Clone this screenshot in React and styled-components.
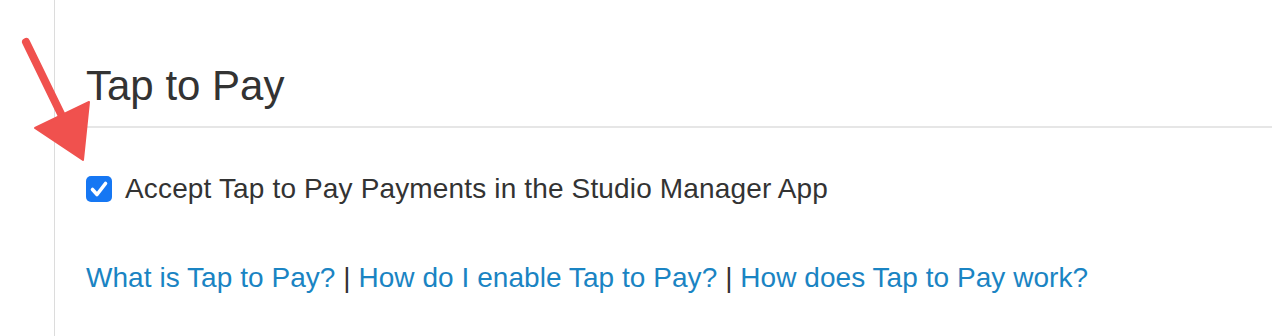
import React, { useState } from 'react';
import styled, { createGlobalStyle } from 'styled-components';

const GlobalStyle = createGlobalStyle`
    body {
        margin: 0;
        background: #fff;
        font-family: "Liberation Sans", Arial, sans-serif;
        color: #333;
    }
`

const Page = styled.div`
    position: relative;
    display: flex;
    height: 336px;
    overflow: hidden;
`

const Gutter = styled.div`
    width: 54px;
    flex-shrink: 0;
`

const Panel = styled.section`
    flex: 1;
    border-left: 1px solid #dcdcdc;
    padding: 62px 0 0 31px;
`

const Heading = styled.h2`
    margin: 0;
    padding-bottom: 16px;
    font-size: 42px;
    font-weight: 400;
    line-height: 48px;
    color: #333;
    border-bottom: 2px solid #e6e6e6;
`

const CheckRow = styled.label`
    display: flex;
    align-items: center;
    gap: 13px;
    margin-top: 45px;
    font-size: 28px;
    line-height: 32px;
    letter-spacing: 0.15px;
    cursor: pointer;
`

const Box = styled.span`
    width: 26px;
    height: 26px;
    border-radius: 5px;
    background: ${p => (p.checked ? '#1677f3' : '#fff')};
    border: ${p => (p.checked ? 'none' : '2px solid #888')};
    box-sizing: border-box;
    display: flex;
    align-items: center;
    justify-content: center;
    flex-shrink: 0;
`

const Links = styled.div`
    margin-top: 57px;
    font-size: 28px;
    line-height: 32px;
    letter-spacing: 0.05px;
    color: #333;
`

const Link = styled.a`
    color: #1a84c3;
    text-decoration: none;
`

const Arrow = styled.svg`
    position: absolute;
    left: 0;
    top: 0;
    pointer-events: none;
`

const App = () => {
    const [checked, setChecked] = useState(true);

    return (
        <Page>
            <GlobalStyle />
            <Gutter />
            <Panel>
                <Heading>Tap to Pay</Heading>
                <CheckRow onClick={() => setChecked(!checked)}>
                    <Box checked={checked}>
                        {checked && (
                            <svg width="26" height="26" viewBox="0 0 26 26">
                                <path d="M6.5 13.5 L11 18.5 L19.5 7.5" fill="none" stroke="#fff" strokeWidth="3.6" strokeLinecap="round" strokeLinejoin="round" />
                            </svg>
                        )}
                    </Box>
                    Accept Tap to Pay Payments in the Studio Manager App
                </CheckRow>
                <Links>
                    <Link href="#">What is Tap to Pay?</Link> | <Link href="#">How do I enable Tap to Pay?</Link> | <Link href="#">How does Tap to Pay work?</Link>
                </Links>
            </Panel>
            <Arrow width="100" height="170" viewBox="0 0 100 170">
                <line x1="26" y1="42" x2="62" y2="116" stroke="#f0514e" strokeWidth="8" strokeLinecap="round" />
                <polygon points="35,128 89,102 83,160" fill="#f0514e" strokeLinejoin="round" stroke="#f0514e" strokeWidth="2" />
            </Arrow>
        </Page>
    );
};

export default App
